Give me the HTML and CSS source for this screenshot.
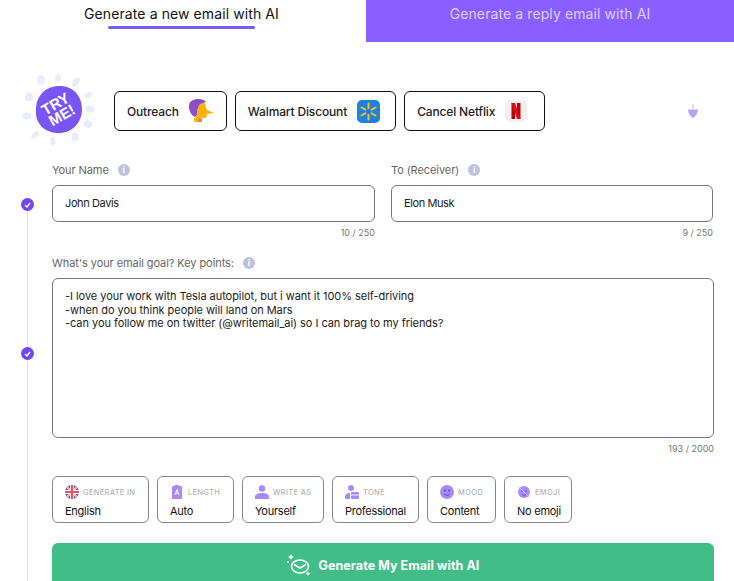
FILE: index.html
```html
<!DOCTYPE html>
<html lang="en">
<head>
<meta charset="utf-8">
<title>Generate email with AI</title>
<link rel="stylesheet" href="styles.css">
</head>
<body>

<div class="tabs">
    <div class="tab tabActive"><span class="tabLabel">Generate a new email with AI</span></div>
    <div class="tab tabOther"><span class="tabLabel">Generate a reply email with AI</span></div>
</div>

<div class="examples">
    <svg class="tryMe" width="74" height="74" viewBox="0 0 74 74">
        <g fill="#e9edfb">
            <ellipse cx="19" cy="7" rx="4" ry="5"/>
            <ellipse cx="36" cy="5" rx="3" ry="4" transform="rotate(20 36 5)"/>
            <ellipse cx="54" cy="9" rx="3" ry="5.5" transform="rotate(35 54 9)"/>
            <ellipse cx="66" cy="22" rx="4.5" ry="2.5" transform="rotate(-20 66 22)"/>
            <ellipse cx="68" cy="36" rx="4.5" ry="3.5"/>
            <ellipse cx="66" cy="51" rx="4.5" ry="3.5" transform="rotate(15 66 51)"/>
            <ellipse cx="53" cy="64" rx="3.5" ry="4.5"/>
            <ellipse cx="31" cy="68" rx="2.5" ry="4.5"/>
            <ellipse cx="13" cy="62" rx="2.5" ry="4.5" transform="rotate(50 13 62)"/>
            <ellipse cx="5" cy="43" rx="4.5" ry="3.5"/>
            <ellipse cx="7" cy="24" rx="4" ry="4.5"/>
        </g>
        <path d="M36 13C50 12 60 22 60 36C60 50 50 60 37 60C24 60 13 52 14 37C14 24 22 14 36 13Z" fill="#7a55f5"/>
        <g class="tryText" transform="rotate(-30 37 37)">
            <text x="37" y="35">TRY</text>
            <text x="37" y="48">ME!</text>
        </g>
    </svg>

    <div class="exampleBtn btnOutreach">
        <span>Outreach</span>
        <svg width="26" height="26" viewBox="0 0 26 26">
            <path d="M13 5L17 5L18 10L19 12L26 15L19 16L18 20L14 20V24H6V21L9 17L9 11Z" fill="#fdb300"/>
            <path d="M1 8C1 3 6 1 10 1C14 1 17 2 18 4L12 6L9 12L9 17L7 19C3 17 1 13 1 8Z" fill="#8e4ec6"/>
            <rect x="10" y="21" width="4" height="3" fill="#f4814d"/>
        </svg>
    </div>

    <div class="exampleBtn btnWalmart">
        <span>Walmart Discount</span>
        <svg width="23" height="23" viewBox="0 0 23 23">
            <rect width="23" height="23" rx="5" fill="#1f82dc"/>
            <g stroke="#fdbb1e" stroke-width="2" stroke-linecap="round">
                <path d="M11.5 3.5V8M11.5 15V19.5M4.5 7.5L8.3 9.7M14.7 13.3L18.5 15.5M4.5 15.5L8.3 13.3M14.7 9.7L18.5 7.5"/>
            </g>
        </svg>
    </div>

    <div class="exampleBtn btnNetflix">
        <span>Cancel Netflix</span>
        <svg width="22" height="22" viewBox="0 0 22 22">
            <rect width="22" height="22" rx="5" fill="#f0f0f2"/>
            <rect x="6.5" y="3" width="3.5" height="16" fill="#b1060f"/>
            <rect x="12" y="3" width="3.5" height="16" fill="#b1060f"/>
            <path d="M6.5 3H10L15.5 19H12Z" fill="#e50914"/>
        </svg>
    </div>

    <svg class="dropArrow" width="10" height="14" viewBox="0 0 10 14">
        <rect x="4.3" y="0" width="1.4" height="5" fill="#d9ccff"/>
        <path d="M0 5.5H10C10 9 8 12 5 14C2 12 0 9 0 5.5Z" fill="#b8a2ff"/>
    </svg>
</div>

<div class="formRow nameRow">
    <div class="rail">
        <div class="dot dotName"><svg width="7" height="6" viewBox="0 0 7 6"><path d="M1 3L3 5L6 1" fill="none" stroke="#fff" stroke-width="1.4"/></svg></div>
        <div class="railLine"></div>
    </div>
    <div class="fieldPair">
        <div class="field">
            <div class="fieldLabel">Your Name <span class="info">i</span></div>
            <div class="textBox">John Davis</div>
            <div class="counter">10 / 250</div>
        </div>
        <div class="field">
            <div class="fieldLabel">To (Receiver) <span class="info">i</span></div>
            <div class="textBox">Elon Musk</div>
            <div class="counter">9 / 250</div>
        </div>
    </div>
</div>

<div class="formRow goalRow">
    <div class="rail">
        <div class="railLine railTop"></div>
        <div class="dot"><svg width="7" height="6" viewBox="0 0 7 6"><path d="M1 3L3 5L6 1" fill="none" stroke="#fff" stroke-width="1.4"/></svg></div>
        <div class="railLine"></div>
    </div>
    <div class="field">
        <div class="fieldLabel">What's your email goal? Key points: <span class="info">i</span></div>
        <div class="goalBox">
            <div>-I love your work with Tesla autopilot, but i want it 100% self-driving</div>
            <div>-when do you think people will land on Mars</div>
            <div>-can you follow me on twitter (@writemail_ai) so I can brag to my friends?</div>
        </div>
        <div class="counter">193 / 2000</div>
    </div>
</div>

<div class="formRow optionsRow">
    <div class="rail"><div class="railLine"></div></div>
    <div class="optionsCol">
        <div class="options">
            <div class="chip">
                <div class="chipHead">
                    <svg width="14" height="14" viewBox="0 0 14 14">
                        <circle cx="7" cy="7" r="7" fill="#4a5ba8"/>
                        <path d="M2 2L12 12M12 2L2 12" stroke="#f7b9c2" stroke-width="2.2"/>
                        <path d="M7 0V14M0 7H14" stroke="#fff" stroke-width="4"/>
                        <path d="M7 0V14M0 7H14" stroke="#ee4d63" stroke-width="2.2"/>
                    </svg>
                    GENERATE IN
                </div>
                <div class="chipValue">English</div>
            </div>
            <div class="chip">
                <div class="chipHead">
                    <svg class="chipIconNarrow" width="10" height="14" viewBox="0 0 10 14">
                        <path d="M1 1H3V0H7V1H9C9.6 1 10 1.4 10 2V13C10 13.6 9.6 14 9 14H1C0.4 14 0 13.6 0 13V2C0 1.4 0.4 1 1 1Z" fill="#a78bfa"/>
                        <path d="M3 10L5 4.5L7 10M3.8 8.2H6.2" fill="none" stroke="#fff" stroke-width="1"/>
                    </svg>
                    LENGTH
                </div>
                <div class="chipValue">Auto</div>
            </div>
            <div class="chip">
                <div class="chipHead">
                    <svg width="14" height="14" viewBox="0 0 14 14">
                        <circle cx="7" cy="3.5" r="3.2" fill="#a78bfa"/>
                        <path d="M0 14V11.5C0 9.5 3 8 7 8C11 8 14 9.5 14 11.5V14Z" fill="#a78bfa"/>
                    </svg>
                    WRITE AS
                </div>
                <div class="chipValue">Yourself</div>
            </div>
            <div class="chip">
                <div class="chipHead">
                    <svg width="14" height="14" viewBox="0 0 14 14">
                        <circle cx="6" cy="3" r="3" fill="#a78bfa"/>
                        <path d="M0 14V11.5C0 9.5 2 8 5 8V14Z" fill="#a78bfa"/>
                        <rect x="6" y="7" width="8" height="7" rx="1" fill="#a78bfa"/>
                        <path d="M6 10H14" stroke="#fff" stroke-width="0.8"/>
                    </svg>
                    TONE
                </div>
                <div class="chipValue">Professional</div>
            </div>
            <div class="chip">
                <div class="chipHead">
                    <svg width="14" height="14" viewBox="0 0 14 14">
                        <circle cx="7" cy="7" r="7" fill="#a78bfa"/>
                        <circle cx="4.8" cy="5.5" r="1" fill="#5b3fc4"/>
                        <circle cx="9.2" cy="5.5" r="1" fill="#5b3fc4"/>
                        <path d="M4 9C5.5 10.8 8.5 10.8 10 9" fill="none" stroke="#5b3fc4" stroke-width="0.9"/>
                    </svg>
                    MOOD
                </div>
                <div class="chipValue">Content</div>
            </div>
            <div class="chip">
                <div class="chipHead">
                    <svg width="14" height="14" viewBox="0 0 14 14">
                        <circle cx="7" cy="7" r="6" fill="#a78bfa"/>
                        <circle cx="5" cy="6" r="0.8" fill="#5b3fc4"/>
                        <circle cx="9" cy="6" r="0.8" fill="#5b3fc4"/>
                        <path d="M5 9.5C6 10.5 8 10.5 9 9.5" fill="none" stroke="#5b3fc4" stroke-width="0.8"/>
                        <path d="M1 1L13 13" stroke="#d9ccff" stroke-width="0.8"/>
                    </svg>
                    EMOJI
                </div>
                <div class="chipValue">No emoji</div>
            </div>
        </div>
        <div class="generateBtn">
            <svg width="24" height="22" viewBox="0 0 24 22">
                <g fill="none" stroke="#fff" stroke-width="1.6">
                    <ellipse cx="13" cy="12.5" rx="8.5" ry="6.5"/>
                    <path d="M7 10.5L13 14L19 10.5"/>
                </g>
                <g fill="#fff">
                    <path d="M4 0L5 2L7 3L5 4L4 6L3 4L1 3L3 2Z"/>
                    <circle cx="1" cy="8" r="0.9"/>
                    <path d="M21 17L21.8 19L23.5 19.8L21.8 20.6L21 22L20.2 20.6L18.5 19.8L20.2 19Z"/>
                </g>
            </svg>
            <span>Generate My Email with AI</span>
        </div>
    </div>
</div>

</body>
</html>
```

FILE: styles.css
```css
html, body
{
    margin: 0;
    padding: 0;
    height: 581px;
    overflow: hidden;
    background-color: #fff;
    font-family: Inter, "Liberation Sans", sans-serif;
    color: #111;
}

.tabs
{
    display: flex;
    height: 42px;
}

.tab
{
    display: flex;
    justify-content: center;
    font-size: 14px;
    letter-spacing: 0.1px;
    padding-top: 5px;
    box-sizing: border-box;
}

.tabActive
{
    width: 366px;
    padding-right: 3px;
}

.tabOther
{
    flex: 1;
    background-color: #8a5fff;
    color: #dccfff;
}

.tabActive .tabLabel
{
    display: block;
    height: 24px;
    line-height: 17px;
    position: relative;
}

.tabActive .tabLabel::after
{
    content: "";
    position: absolute;
    left: 24px;
    right: 24px;
    bottom: 0;
    height: 3px;
    border-radius: 2px;
    background-color: #7c58fb;
}

.tabOther .tabLabel
{
    line-height: 17px;
}

.examples
{
    display: flex;
    align-items: center;
    height: 74px;
    margin-top: 32px;
    padding-left: 22px;
}

.tryMe
{
    margin-right: 18px;
    margin-bottom: 2px;
    flex: none;
}

.tryText text
{
    fill: #fff;
    font-family: "Liberation Sans", sans-serif;
    font-weight: 700;
    font-size: 15px;
    text-anchor: middle;
}

.exampleBtn
{
    display: flex;
    align-items: center;
    gap: 10px;
    height: 40px;
    box-sizing: border-box;
    border: 1px solid #111;
    border-radius: 6px;
    padding: 0 14px 0 12px;
    margin-right: 8px;
    font-size: 12px;
    font-weight: 500;
    letter-spacing: -0.15px;
    color: #222;
}

.btnOutreach
{
    gap: 9px;
    padding-right: 12px;
}

.btnWalmart
{
    padding-right: 15px;
}

.btnNetflix
{
    padding-right: 17px;
}

.dropArrow
{
    margin-left: 135px;
}

.formRow
{
    display: grid;
    grid-template-columns: 52px 1fr;
}

.nameRow
{
    margin-top: 14px;
    height: 93px;
}

.goalRow
{
    height: 200px;
}

.optionsRow
{
    height: 126px;
}

.rail
{
    display: flex;
    flex-direction: column;
    align-items: center;
    padding-left: 2px;
}

.dot
{
    flex: none;
    width: 13px;
    height: 13px;
    border-radius: 50%;
    background-color: #7047f0;
    display: flex;
    align-items: center;
    justify-content: center;
}

.dotName
{
    margin-top: 36px;
}

.railLine
{
    flex: 1;
    width: 1px;
    background-color: #d9d9de;
}

.railTop
{
    flex: none;
    height: 92px;
}

.fieldPair
{
    display: grid;
    grid-template-columns: 323px 322px;
    gap: 16px;
}

.field
{
    width: 662px;
    display: flex;
    flex-direction: column;
}

.fieldPair .field
{
    width: auto;
}

.fieldLabel
{
    height: 16px;
    line-height: 16px;
    font-size: 11px;
    letter-spacing: -0.08px;
    color: #666;
    margin-bottom: 7px;
    display: flex;
    align-items: center;
    gap: 9px;
}

.info
{
    width: 12px;
    height: 12px;
    border-radius: 50%;
    background-color: #bcc3e2;
    color: #fff;
    font-size: 9px;
    font-weight: 700;
    line-height: 12px;
    text-align: center;
}

.textBox
{
    height: 37px;
    box-sizing: border-box;
    border: 1px solid #777;
    border-radius: 6px;
    padding: 0 12px;
    line-height: 35px;
    font-size: 11px;
    letter-spacing: -0.4px;
    color: #222;
}

.goalBox
{
    height: 160px;
    box-sizing: border-box;
    border: 1px solid #777;
    border-radius: 6px;
    padding: 11px 12px;
    font-size: 11px;
    letter-spacing: -0.05px;
    line-height: 13.5px;
    color: #222;
}

.counter
{
    text-align: right;
    font-size: 9px;
    line-height: 12px;
    color: #777;
    margin-top: 5px;
}

.optionsCol
{
    display: flex;
    flex-direction: column;
    width: 662px;
    padding-top: 21px;
}

.options
{
    display: grid;
    grid-template-columns: 97px 77px 82px 87px 69px 68px;
    gap: 8px;
}

.chip
{
    height: 47px;
    box-sizing: border-box;
    border: 1px solid #888;
    border-radius: 6px;
    padding: 8px 0 0 12px;
}

.chipHead
{
    display: flex;
    align-items: center;
    gap: 4px;
    height: 14px;
    font-size: 7.5px;
    font-weight: 500;
    letter-spacing: 0.3px;
    color: #b5b5b5;
    white-space: nowrap;
}

.chipIconNarrow
{
    margin: 0 2px;
}

.chipValue
{
    margin-top: 5px;
    font-size: 11px;
    letter-spacing: -0.25px;
    line-height: 15px;
    color: #111;
    white-space: nowrap;
}

.generateBtn
{
    margin-top: 20px;
    height: 38px;
    padding-top: 6px;
    box-sizing: border-box;
    border-radius: 6px 6px 0 0;
    background-color: #43bd88;
    display: flex;
    align-items: center;
    justify-content: center;
    gap: 8px;
    color: #fff;
    font-size: 12.5px;
    font-weight: 700;
    letter-spacing: 0.05px;
}
```
